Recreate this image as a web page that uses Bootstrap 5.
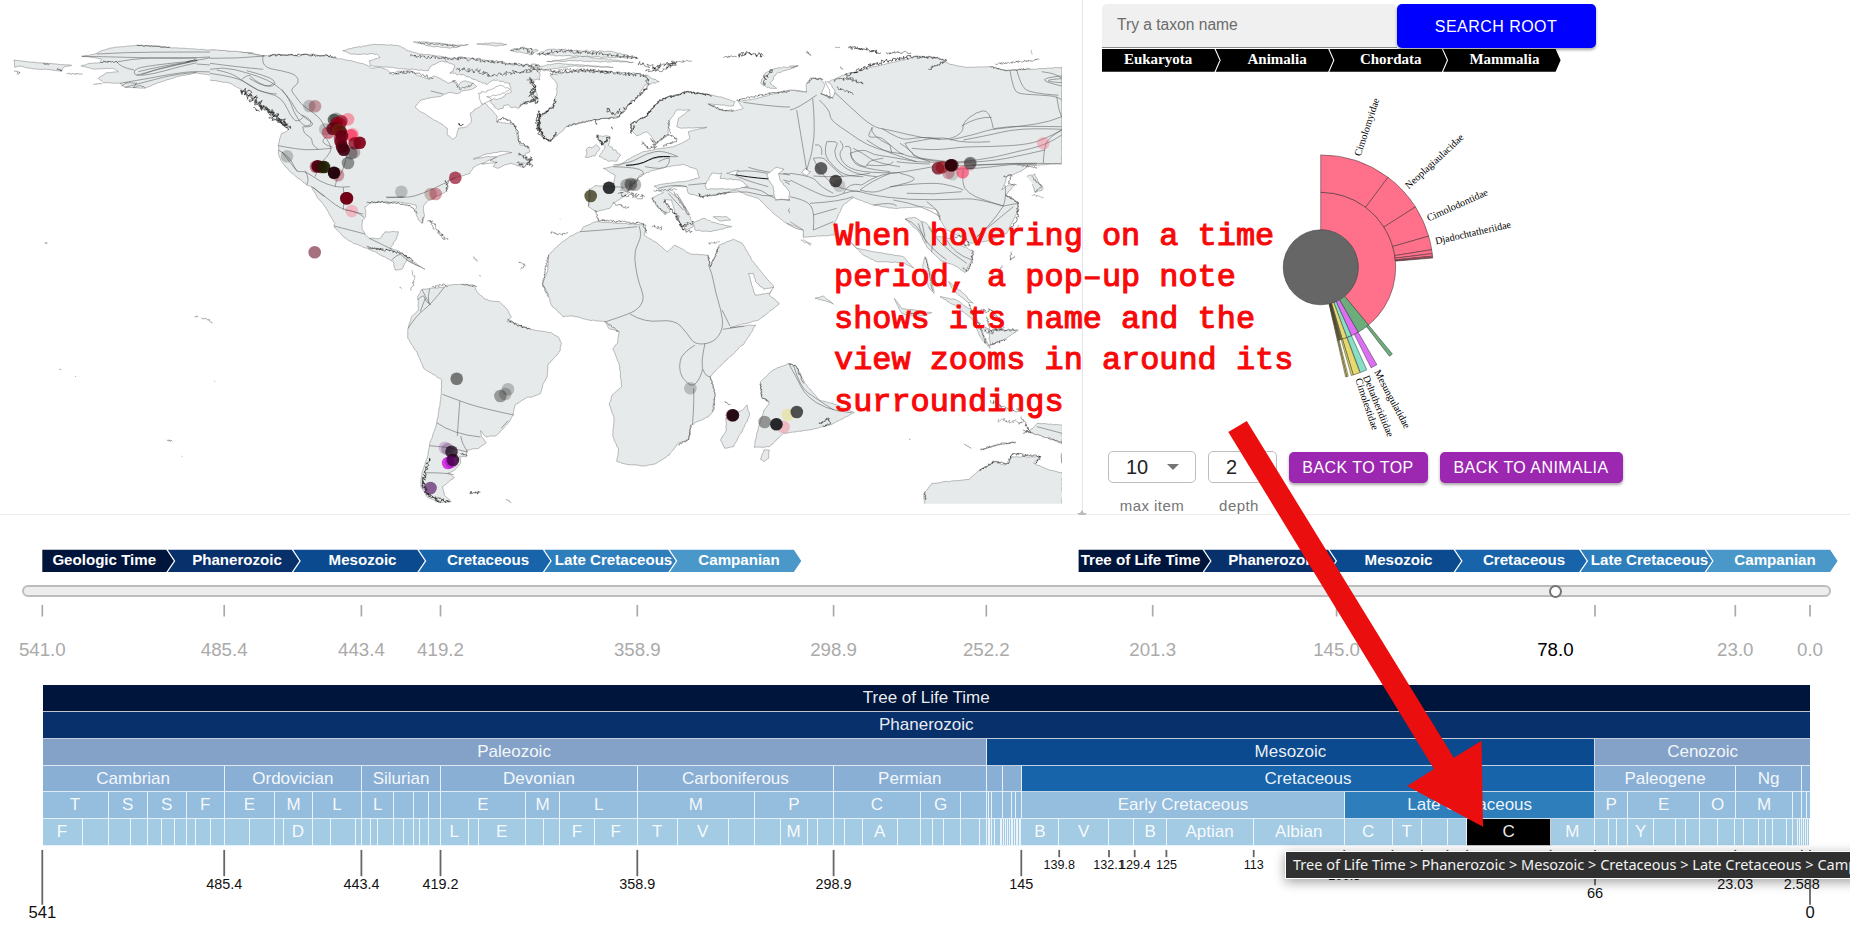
<!DOCTYPE html>
<html lang="en">
<head>
<meta charset="utf-8">
<meta name="viewport" content="width=device-width, initial-scale=1">
<title>Tree of Life Time</title>
<link href="https://cdn.jsdelivr.net/npm/bootstrap@5.3.0/dist/css/bootstrap.min.css" rel="stylesheet">
<style>
body{font-family:"Liberation Sans",Arial,sans-serif;width:1850px;height:942px;background:#fff;color:#000}
svg{display:block}
.stage{width:1850px;height:942px}
.upper{height:515px;border-bottom:1px solid #ececec}
.map-pane{width:1082px}
.tree-pane{border-left:1px solid #e4e4e4;padding:4px 0 0 19px}
.taxon-input{width:295px;height:44px;background:#f0f0f0;border:0;border-bottom:1px solid #8c8c8c;border-radius:5px 5px 0 0;padding:0 15px 1px;font-size:15.6px;color:#6b6b6b}
.taxon-input::placeholder{color:#6b6b6b;opacity:1}
.mbtn{border:0;border-radius:5px;color:#fff;font-size:16px;letter-spacing:.457px;padding:0 1px 0 0;line-height:1;box-shadow:0 2px 3px rgba(0,0,0,.35)}
.mbtn-search{width:199px;height:44px;background:#00f;padding-top:1px}
.mbtn-nav{height:31px;background:#9c27b0}
.sunburst text{font:10.2px "Liberation Serif",serif}
.trail-tree text{font:bold 15px "Liberation Serif",serif;fill:#fff;text-anchor:middle}
.controls{padding-left:6px;margin-top:7px}
.picker{height:32px;border:1px solid #bdbdbd;border-radius:5px;font-size:20px;color:#222;line-height:31px;padding-left:17px}
.caret{width:0;height:0;border:6px solid transparent;border-top:6px solid #757575;border-bottom:0}
.cap{font-size:15px;letter-spacing:.45px;color:#757575;line-height:18px;margin-top:14px}
.lower{height:427px}
.trail-time text{font:bold 15.1px "Liberation Sans",sans-serif;fill:#fff;text-anchor:middle}
.trackbar{height:12px;margin:13px 19px 0 22px;border:2px solid #bdbdbd;border-radius:6px;background:#ededed}
.thumb{width:13px;height:13px;border:2px solid #757575;border-radius:50%;background:#fff;left:1525px;top:-2.5px}
.scale-ticks text{font:18.7px "Liberation Sans",sans-serif;fill:#aaa;text-anchor:middle}
.chart{margin-left:42.5px;width:1767.5px}
.lane{height:26.87px}
.cell{flex:none;overflow:hidden;color:rgba(255,255,255,.93);font-size:17px;line-height:25.4px;text-align:center;white-space:nowrap;border-right:1px solid rgba(255,255,255,.8);border-bottom:1.4px solid rgba(255,255,255,.75)}
.cell:last-child{border-right:0}
.axis text{font-family:"Liberation Sans",sans-serif;text-anchor:middle;fill:#111}
.tip{left:1285px;top:851px;width:700px;height:28px;background:#303030;border:1px solid #fff;box-shadow:0 3px 12px rgba(0,0,0,.38);color:#f2f2f2;font:14.52px "Noto Sans",sans-serif;line-height:24px;padding-left:7px;white-space:nowrap}
.note{left:834px;top:216px;font:31.9px "Liberation Mono",monospace;line-height:41.4px;color:#f80808;white-space:pre;-webkit-text-stroke:1.1px #f80808}
.arrow{left:0;top:0;pointer-events:none}
</style>
</head>
<body>
<div class="stage position-relative overflow-hidden">
  <section class="upper d-flex">
    <div class="map-pane flex-shrink-0"><svg id="map" width="1062" height="504" viewBox="0 0 1062 504"></svg></div>
    <div class="tree-pane flex-grow-1">
      <div class="d-flex">
        <input class="taxon-input" type="text" placeholder="Try a taxon name">
        <button class="mbtn mbtn-search">SEARCH ROOT</button>
      </div>
      <svg class="trail-tree" id="trailTree" width="480" height="25"></svg>
      <svg class="sunburst" id="sun" width="480" height="371" viewBox="1102 73 480 371"></svg>
      <div class="controls d-flex align-items-start">
        <div class="text-center"><div class="picker d-flex align-items-center" style="width:88px"><span>10</span><span class="caret ms-auto me-3"></span></div><div class="cap">max item</div></div>
        <div class="text-center" style="margin-left:12px"><div class="picker d-flex align-items-center" style="width:69px"><span>2</span><span class="caret ms-auto me-3"></span></div><div class="cap" style="margin-right:7px">depth</div></div>
        <button class="mbtn mbtn-nav" style="width:139px;margin-left:12px;margin-top:1px">BACK TO TOP</button>
        <button class="mbtn mbtn-nav" style="width:183px;margin-left:12px;margin-top:1px">BACK TO ANIMALIA</button>
      </div>
    </div>
  </section>
  <section class="lower">
    <svg class="trail-time" id="trailTime" width="1850" height="57"></svg>
    <div class="trackbar position-relative"><span class="thumb position-absolute d-block"></span></div>
    <svg class="scale-ticks" id="ticks" width="1850" height="88"></svg>
    <div class="chart" id="chart"></div>
    <svg class="axis" id="axis" width="1850" height="94" viewBox="0 846.8 1850 94"></svg>
  </section>
  <div class="tip position-absolute">Tree of Life Time &gt; Phanerozoic &gt; Mesozoic &gt; Cretaceous &gt; Late Cretaceous &gt; Campanian</div>
  <div class="note position-absolute">When hovering on a time
period, a pop–up note
shows its name and the
view zooms in around its
surroundings</div>
  <svg class="arrow position-absolute" width="1850" height="942"><path fill="#bbb" d="M1082 510l2 3h3l-2 2h-6l-2-2h3z"/><path fill="#ea0e0e" d="M1228.3 432L1246.8 421L1453.8 757.7L1481.5 740.7L1483 826.7L1407.1 786L1434 769Z"/></svg>
</div>
<script src="https://cdn.jsdelivr.net/npm/bootstrap@5.3.0/dist/js/bootstrap.bundle.min.js"></script>
<script>
const $ = id => document.getElementById(id);
/* seeded generator so coastlines are stable between loads */
let seed = 7; const rnd = () => (seed = (seed * 16807) % 2147483647) / 2147483647 - .5;

/* ---------- palaeogeographic map ---------- */
const tiles = { A:[0,0,.34439], B:[530,0,.35714], C:[210,30,1/3], D:[10,30,1/3], E:[530,30,1/3], F:[790,30,1/3] };
const pts = (t, s) => s.trim().split(/\s+/).map(p => { const [x, y] = p.split(',').map(Number), k = tiles[t]; return [k[0] + x * k[2], k[1] + y / 3]; });
const f = n => n.toFixed(1);
function jag(P, amp, closed, step = 2.2) {
  if (closed) P = P.concat([P[0]]);
  let d = 'M' + f(P[0][0]) + ' ' + f(P[0][1]);
  for (let i = 1; i < P.length; i++) {
    const [a, b] = P[i - 1], [c, e] = P[i], n = Math.max(1, Math.round(Math.hypot(c - a, e - b) / step));
    for (let j = 1; j <= n; j++) { const q = j < n ? amp : 0; d += 'L' + f(a + (c - a) * j / n + rnd() * 2 * q) + ' ' + f(b + (e - b) * j / n + rnd() * 2 * q); }
  }
  return d;
}
function soft(P) {
  let d = 'M' + f(P[0][0]) + ' ' + f(P[0][1]);
  for (let i = 1; i < P.length - 1; i++) { const m = i === P.length - 2 ? P[i + 1] : [(P[i][0] + P[i + 1][0]) / 2, (P[i][1] + P[i + 1][1]) / 2]; d += `Q${f(P[i][0])} ${f(P[i][1])} ${f(m[0])} ${f(m[1])}`; }
  if (P.length === 2) d += 'L' + f(P[1][0]) + ' ' + f(P[1][1]);
  return d;
}
let out = '';
const land = (t, s, amp = .5, closed = true) => out += `<path d="${jag(pts(t, s), amp, closed)}" fill="#e6eaea" stroke="#555" stroke-opacity=".62" stroke-width=".6"/>`;
const sea = (t, s, amp = .5) => out += `<path d="${jag(pts(t, s), amp, true)}" fill="#fff" stroke="#555" stroke-opacity=".65" stroke-width=".6"/>`;
const lines = (t, ...a) => a.forEach(s => out += `<path d="${soft(pts(t, s))}" fill="none" stroke="#555" stroke-opacity=".7" stroke-width=".75"/>`);
const rough = (t, s, amp = 1.5, o = .75) => out += `<path d="${jag(pts(t, s), amp * 1.1, false, .9)}" fill="none" stroke="#222" stroke-opacity="${o}" stroke-width=".75"/>`;

// Alaska and Beringia
land('D', '12,90 60,96 110,100 185,106 160,112 155,124 110,118 70,117 30,108 14,112', .3);
land('D', '780,82 728,69 600,60 470,52 440,48 380,46 300,54 270,64 255,72 215,79 255,83 275,88 270,98 240,100 213,108 250,117 310,115 325,125 290,128 265,145 280,158 330,160 345,172 405,175 440,160 500,140 560,129 600,135 660,155 700,175 780,228', .25, false);
lines('D', '260,72 350,67 500,66 640,66 728,70', '215,79 280,80 420,84 520,86 620,79 560,92 480,100 400,110 370,120 375,138 430,132 500,112 560,98', '325,95 360,88 450,82 560,84', '560,102 700,112 780,118', '330,160 400,148 480,133 560,122 680,133 780,158', '620,120 650,112 700,128 760,152 780,176', '700,138 708,152 735,175 780,185', '560,92 430,120 380,136', '345,172 420,152 500,132 560,127', '320,95 330,112 372,120', '395,134 440,116 520,100 562,90', '385,125 450,108 540,96');
rough('D', '12,123 30,128 20,132', .8, .5); rough('D', '170,131 218,132', .6, .5); rough('D', '250,162 276,162', .6, .5); rough('D', '272,96 325,95', .8, .7); rough('D', '140,118 156,122', .9);
rough('D', '335,168 352,158 380,160 370,172 390,166 405,174', .5, .5); rough('D', '100,100 118,104', .6); rough('D', '380,46 480,52', .5, .7); rough('D', '530,94 562,90', .8, .7);
// North America
land('C', '0,60 80,64 150,76 175,78 185,74 240,74 265,80 280,73 310,72 330,78 352,75 360,82 375,85 390,86 435,95 470,105 482,114 510,112 535,122 548,135 560,124 600,122 620,135 660,148 670,138 695,148 715,160 735,150 745,168 750,158 765,152 790,160 800,170 785,178 760,182 745,190 715,188 690,200 650,205 630,212 615,230 625,240 660,262 700,285 712,295 712,315 728,328 740,318 745,295 770,290 785,275 780,250 800,235 825,220 835,230 850,245 862,262 860,275 890,280 915,285 920,310 930,345 955,350 960,365 945,372 958,400 930,400 940,412 900,400 862,415 850,410 860,397 815,400 790,412 780,430 755,438 735,445 715,450 712,480 700,490 650,515 640,530 643,560 638,580 625,570 618,550 618,525 590,520 555,515 535,522 520,515 480,520 465,530 467,560 457,570 456,595 465,612 478,625 510,625 525,605 565,605 560,625 540,655 570,665 600,690 645,718 610,700 590,690 575,718 555,720 550,695 530,685 500,668 472,655 430,640 400,620 372,590 375,580 345,530 320,500 305,470 290,465 240,425 215,395 205,370 205,345 215,310 235,300 215,280 185,262 165,235 150,225 125,195 95,180 60,160 0,150', .45, false);
sea('C', '790,387 830,372 880,364 905,368 870,376 840,392 862,397 815,402 860,380 830,380', .3);
// Arctic archipelago
land('C', '398,62 440,52 495,43 565,47 595,62 630,72 690,78 720,95 690,95 660,110 655,122 600,118 540,112 480,108 478,92 510,82 500,72 420,72', .5);
land('C', '700,80 800,86 900,100 990,108 990,150 950,150 975,165 985,215 940,215 925,235 890,225 865,240 840,212 870,205 905,185 900,160 850,150 830,165 800,150 780,140 720,130 735,112 715,98', 1.2);
sea('C', '805,190 840,180 870,165 900,178 870,195 830,200 845,210 815,222', .9);
land('C', '610,36 680,38 740,46 775,44 720,55 660,48', .5); land('C', '800,42 850,38 890,43 860,48', .4); land('C', '900,62 940,50 985,62 960,75 930,66', .8);
rough('C', '600,78 700,84 800,90 900,102 985,108', 1.6, .55); rough('C', '740,120 800,122 850,138 900,128 985,120', 2, .55); rough('C', '625,38 750,48', 1, .5); rough('C', '905,60 940,55 970,72', 1.4, .5);
rough('C', '960,150 978,170 960,185 985,205 950,215 930,230', 1.6, .8); rough('C', '990,250 980,280 990,315', 2.3, .8);
rough('C', '860,275 880,262 910,282 925,310 930,340 958,352', 1.1, .7); rough('C', '790,160 750,180 730,150', 1.2, .5); rough('C', '540,130 610,125 670,145', 1.2, .6); rough('C', '745,282 760,285', 1.2, .9);
rough('C', '95,180 125,195 150,222 180,245 215,268 240,290', 2.8, .9); rough('C', '98,186 130,210 165,236 200,262 235,282', 2.8, .8); rough('C', '130,232 148,245', 1, .8); rough('C', '178,262 215,276 236,300', 1.4, .9);
rough('C', '175,77 240,74 280,75 350,76 378,84', .9, .8); rough('C', '925,370 962,392 945,410 920,398', 1.3, .7); rough('C', '708,452 712,485', 1.3, .8); rough('C', '655,572 672,580 685,605 705,630', 1.6, .45); rough('C', '470,518 530,516 600,526 622,550', .7, .7); rough('C', '473,652 520,660 570,668 610,692', 1.2, .8); rough('C', '635,580 640,560', .8, .5); rough('C', '605,720 614,745 603,782', 1.1, .4);
lines('C', '160,75 155,95 172,115 215,122 260,135 268,160 240,178 258,200 275,225 330,262 345,295 350,300', '0,85 80,86 165,78', '0,100 90,112 160,118', '0,118 40,110 110,128 175,150 215,178 245,215 262,245', '20,120 60,128 95,150 140,182 200,195 225,220 240,255 262,280 280,262', '95,148 118,130 130,150 175,172 200,162 180,140 110,122', '0,130 80,142 120,165 160,190 200,192', '215,178 240,210 250,245 280,290 305,285 300,265 275,255', '262,245 290,268 312,280 300,292 280,290', '118,145 175,182 190,160', '205,347 260,358 320,360 365,355', '350,328 368,352 352,380 330,400 315,440', '205,360 240,380 260,428 285,422 330,455 375,470 400,472 420,470', '215,365 235,390 262,425', '285,422 300,445 290,465', '305,470 340,495 375,525 405,540 460,552', '310,472 330,492 345,500', '375,470 378,450 395,430 405,400 412,372', '400,472 405,500 400,540', '278,290 280,310 308,325 305,345 325,358', '368,352 345,345 335,330 350,320', '405,540 440,542 462,562', '372,588 420,600 465,612', '478,625 510,640 545,658', '470,648 500,662 520,655', '545,690 570,665 585,690 630,710', '528,501 590,505 640,490 700,462 735,443', '530,503 580,500', '662,183 700,192');
// islands of the open ocean
[['A','130,728 138,730'],['A','565,950 575,948'],['A','585,953 605,960 616,970'],['A','484,1320 500,1323'],['A','172,1108 178,1109'],['A','1375,770 1385,785'],['A','1505,785 1525,795 1512,808'],['A','1248,660 1260,690'],['A','1270,690 1300,720'],['A','622,1142 624,1145'],['A','1160,862 1166,866'],['A','1468,1498 1485,1508'],['A','1392,827 1396,830'],['A','218,1129 221,1130'],['A','527,1368 530,1370']].forEach(a => rough(a[0], a[1], .8, .5));
rough('A', '1365,1477 1395,1477', 1.6, .8);
// South America
land('A', '1184,1000 1185,985 1195,950 1215,930 1213,890 1225,868 1250,865 1285,862 1300,855 1340,853 1375,855 1385,875 1405,895 1420,902 1450,905 1470,925 1485,950 1472,965 1500,970 1530,985 1568,993 1601,998 1622,1012 1630,1030 1625,1055 1591,1095 1589,1130 1578,1150 1570,1180 1544,1192 1530,1192 1495,1215 1490,1245 1475,1270 1440,1308 1410,1310 1395,1292 1398,1310 1412,1328 1390,1345 1355,1350 1355,1370 1335,1370 1338,1390 1320,1410 1300,1420 1320,1432 1285,1460 1290,1485 1310,1505 1275,1508 1240,1490 1222,1460 1225,1420 1240,1375 1247,1335 1268,1270 1280,1200 1283,1140 1230,1105 1212,1060 1184,1015', .35);
lines('A', '1285,1183 1335,1203 1400,1225 1492,1245', '1335,1203 1328,1308', '1268,1268 1315,1303 1395,1311', '1247,1337 1300,1338 1358,1356', '1338,1308 1342,1335 1358,1355', '1230,1418 1300,1418 1318,1424', '1185,985 1210,945 1250,915 1290,862', '1225,868 1235,890 1250,915', '1247,866 1242,890 1245,910', '1213,900 1230,880 1235,905 1250,915', '1220,935 1235,895', '1475,1262 1455,1285');
rough('A', '1247,1375 1235,1415 1226,1455 1245,1490 1305,1507', 1.8, .85); rough('A', '1228,1440 1240,1480 1280,1505', 1.6, .8); rough('A', '1255,862 1290,852 1300,860', 1.2, .5); rough('A', '1340,853 1385,860', .9, .5); rough('A', '1474,960 1500,975 1540,988', .9, .8); rough('A', '1338,1360 1355,1368', 1, .7);
// Africa and Arabia
land('B', '140,695 110,710 75,740 52,765 50,810 35,850 50,880 60,915 92,950 120,948 165,960 210,965 220,985 250,995 245,1030 232,1045 250,1095 257,1160 230,1185 222,1215 235,1250 232,1310 248,1350 243,1385 270,1393 320,1398 350,1392 390,1365 415,1330 445,1318 450,1275 500,1250 515,1230 518,1180 505,1130 530,1100 600,1030 632,975 600,978 560,983 640,960 665,940 698,912 682,895 670,885 682,860 625,785 595,730 570,718 530,735 505,800 498,765 450,762 405,735 385,755 350,725 320,705 325,675 250,670 185,665 150,680', .4);
sea('B', '612,820 625,820 632,845 655,868 682,862 670,880 630,885 620,850', .5);
lines('B', '140,695 210,690 300,680', '305,677 315,705 292,750 295,800 305,850 320,890 310,920 280,942 212,965', '280,942 320,968 405,958 440,1000 462,1035 515,1028 542,985 535,930 520,880 510,820 500,795', '540,988 600,978', '538,930 560,978', '462,1035 425,1060 417,1100 425,1135 458,1165 485,1115 480,1080 490,1030', '458,1165 460,1200 455,1275', '485,1108 490,1130 505,1130');
rough('B', '52,765 35,850 50,890', .8, .6); rough('B', '505,1130 518,1180 512,1235', .8, .5); rough('B', '450,1275 445,1318 415,1335', .7, .6); rough('B', '498,765 505,800 530,740', .9, .6); rough('B', '210,965 248,995', .9, .5); rough('B', '58,697 80,703 105,700', 1, .5); rough('B', '545,1205 560,1215', 1, .5);
// Madagascar, India, Australia
land('B', '608,1215 615,1245 600,1280 570,1340 545,1345 533,1320 550,1290 548,1255 575,1240 595,1230', .4);
land('B', '725,1090 745,1098 770,1150 810,1200 860,1215 908,1238 840,1275 780,1290 710,1300 670,1340 628,1342 635,1300 655,1230 670,1210 648,1190 645,1145 680,1110', .3);
lines('B', '725,1092 750,1140 765,1175 800,1210 860,1235 900,1238', '738,1096 755,1160 800,1195 850,1230'); land('B', '655,1350 670,1350 668,1375 655,1385 645,1378', .4); rough('B', '810,1272 835,1255 840,1272 820,1278', .9, .8); rough('B', '645,1150 650,1195 670,1205', .9, .6); rough('B', '725,1092 745,1098 765,1150', .9, .6);
land('B', '1105,1511 1103,1480 1125,1450 1230,1438 1260,1410 1300,1385 1330,1395 1350,1370 1430,1370 1410,1390 1450,1408 1490,1418 1490,1511', .5, false);
rough('B', '1260,1412 1300,1385 1340,1390 1350,1362 1430,1370 1415,1392', 1.2, .7); land('B', '1395,1298 1420,1270 1490,1275 1490,1332 1450,1310', .4, false); rough('B', '1375,1250 1400,1295 1380,1300', 1.5, .6); rough('B', '1380,1290 1490,1328', .7, .6); lines('B', '1420,1280 1490,1300', '1262,1350 1310,1332 1360,1326', '1215,1332 1236,1345'); rough('B', '1262,1350 1310,1332 1360,1326', .9, .5); rough('B', '1310,1260 1380,1268', 1.8, .4); rough('B', '1290,1200 1330,1225 1370,1230', 2, .5); rough('B', '1105,1475 1108,1500', .9, .7); rough('B', '1488,1360 1489,1390', .4, .6); rough('B', '1062,1316 1064,1320', .4, .5);
// Greenland and the high Arctic
land('E', '80,160 60,135 120,125 180,122 300,128 350,135 388,155 345,165 320,205 290,230 265,260 180,272 110,290 60,335 30,310 25,265 70,225 80,190', .7);
land('E', '20,72 60,58 150,62 250,65 325,85 260,82 100,78', .8); land('E', '50,95 135,83 150,78 310,97 220,95 130,92', .5); land('E', '0,115 80,100 250,112 130,108 40,120', .4); rough('E', '0,112 60,122 140,118 240,124', 1.5, .4);
rough('E', '25,72 90,62 200,70 322,84', 1.6, .6); rough('E', '60,130 160,122 250,128 350,138', 1.6, .6); rough('E', '350,140 355,165 320,205 290,230 265,260', 1.8, .7); rough('E', '75,210 70,235 30,255 28,290 40,322 60,333 80,308', 1.5, .95); rough('E', '30,245 24,285 45,325', 1.6, .9); rough('E', '230,235 250,252 268,240', 2.3, .7);
rough('E', '325,100 370,112 440,96 400,118 350,118', 2.2, .6); rough('E', '440,95 485,92', .9, .5); rough('E', '0,55 10,68', 1.6, .5); rough('E', '0,145 18,180 0,195 22,220', 2, .7); rough('E', '0,380 5,412', 1.8, .8); rough('E', '110,288 180,272 265,262', .8, .6);
rough('E', '580,82 620,80', 1.2, .6); rough('E', '625,78 650,70 700,76', 2, .8); rough('E', '830,62 842,76', .6, .5);
land('E', '692,160 705,130 740,115 805,107 780,118 740,130 720,160 740,175 710,172', .7); rough('E', '725,120 705,145 700,165', 1.8, .7);
// Europe
land('E', '900,612 820,620 822,600 770,580 730,550 685,505 650,495 620,480 560,495 510,500 475,490 470,470 430,470 415,482 450,510 480,560 490,590 470,600 440,570 425,510 402,508 420,545 405,555 385,530 365,505 378,498 400,488 372,468 410,460 470,453 508,443 500,418 460,403 400,412 330,435 320,455 270,480 300,487 250,520 240,535 200,545 175,530 178,480 195,467 250,470 255,435 220,415 270,405 290,390 340,365 375,358 430,350 455,340 480,325 475,305 530,292 455,295 440,290 445,265 480,240 440,240 420,270 415,290 415,315 378,340 365,320 350,305 320,318 305,300 302,280 345,262 375,225 400,205 470,186 520,190 580,203 615,215 610,228 535,222 570,240 610,245 640,235 625,215 680,205 730,192 780,180 835,185 900,200', .35, false);
rough('E', '305,310 304,282 345,262 375,225 400,206 470,186 545,198', 1.2, .95); rough('E', '310,300 312,285', 1.2, .9); rough('E', '535,222 580,242 612,240', 1.1, .6); rough('E', '620,212 690,195 780,183', 1, .6); rough('E', '375,340 410,315 430,318 440,330 400,350', 1.2, .6); rough('E', '335,335 355,355 380,350 360,325', 1.6, .6); rough('E', '415,270 420,310', 1, .5);
land('E', '208,380 225,350 210,340 205,318 240,320 235,345 272,375 262,392 232,392', .8); land('E', '166,382 172,355 200,345 210,355 195,378', .8); rough('E', '200,315 215,345 238,320', 1.8, .9); rough('E', '246,290 248,298', .9, .9); rough('E', '195,270 200,285', .7, .7);
rough('E', '365,505 385,535 408,550', 1.2, .5); rough('E', '405,510 440,560 460,600 485,605', 1.7, .7); rough('E', '440,560 455,590 490,575', 1.8, .6); rough('E', '430,485 475,555', .8, .5); rough('E', '505,490 520,505', 1.4, .7); rough('E', '265,492 345,500', 2.6, .5); rough('E', '250,520 295,535', 1.2, .5); rough('E', '365,590 395,595', 1.8, .5); rough('E', '370,482 440,478', .8, .5); rough('E', '195,540 205,570 340,580 350,610', 1, .6); rough('E', '515,500 600,488', 1.2, .5); rough('E', '535,640 570,635', 1.2, .4); rough('E', '90,566 91,568', .6, .5); rough('E', '330,440 290,485', .9, .5);
land('E', '490,580 520,565 560,580 605,590 540,605 495,600', .5); land('E', '550,560 590,560 602,570 570,573', .4);
land('E', '820,628 845,642', .5, false);
lines('E', '290,407 330,405 380,378 440,380', '250,405 300,400 350,370 400,360 445,380', '345,410 400,420 418,400 420,378 385,395', '250,410 330,412 345,435 330,440', '640,217 797,240 835,212 865,192', '797,240 815,300 820,400 830,420', '850,222 853,300 850,380 825,430', '850,340 880,340 900,332', '475,465 530,460', '560,492 640,480 700,500 730,497', '600,430 640,415 712,430', '610,433 640,450 715,470', '655,412 700,428 830,440', '620,470 690,475 725,505 800,512 850,520 900,522', '770,580 800,600 822,600', '775,540 800,515 830,520 850,555 850,600', '775,540 790,570 825,605', '850,555 900,530', '760,450 800,465 845,445', '760,430 850,440', '765,455 820,490 900,510', '178,475 185,500 175,528', '250,470 280,472', '850,380 870,430 900,455', '735,510 770,505 840,520', '385,475 440,460 470,470', '415,490 460,540', '440,490 480,555');
out += '<path d="' + soft(pts('E', '288,406 330,405 380,376 420,380')) + '" fill="none" stroke="#111" stroke-width="1"/><path d="' + soft(pts('E', '605,432 650,442 718,447')) + '" fill="none" stroke="#111" stroke-width="1"/>';
sea('E', '525,465 545,430 575,430 570,445 630,450 655,470 610,477 530,477'); sea('E', '590,430 625,420 615,436', .3); sea('E', '712,430 740,412 762,418 745,432 750,450 778,485 778,508 735,508 730,470 715,450'); sea('E', '815,425 830,412 842,425 830,440', .5);
out += '<path d="' + jag(pts('E', '798,240 800,256'), .1) + '" stroke="#111" stroke-width="1.2"/>';
// Asia
land('F', '0,180 50,187 48,165 60,145 90,145 105,165 95,190 118,205 135,190 110,160 125,150 150,140 175,130 200,125 230,115 360,85 375,78 450,85 480,103 530,112 600,110 650,122 720,118 815,112 815,400 780,402 760,405 720,405 690,425 665,435 650,440 645,460 635,480 655,465 675,462 648,495 685,520 680,550 650,610 600,632 540,640 510,620 490,610 470,600 450,570 440,540 400,530 310,535 250,525 190,503 160,525 135,575 133,615 40,622 40,600 0,575', .3, false);
sea('F', '105,155 120,160 135,185 130,200 118,205 120,180', .6); sea('F', '35,428 45,415 62,425 50,438', .6);
rough('F', '50,160 65,145 100,148', 1, .6); rough('F', '135,150 175,145 220,160', 1.6, .6); rough('F', '140,172 190,192', 1, .6); rough('F', '165,135 230,112 290,92 372,80', 1.9, .8); rough('F', '372,80 440,84 470,92 415,118', 1.2, .7); rough('F', '175,55 230,58 270,68', 1.9, .8); rough('F', '288,68 362,68', 1.3, .6); rough('F', '615,102 690,95 748,88', 1, .5); rough('F', '600,110 650,122 720,115', .9, .5); rough('F', '640,440 665,435 655,460 680,465', 1.2, .5); rough('F', '645,495 682,515 684,560 660,600', 1.2, .65); rough('F', '135,52 150,52', .4, .5); rough('F', '150,110 160,118', .7, .6); rough('F', '48,65 62,78', .5, .4); rough('F', '724,60 726,74', .4, .4); rough('F', '0,112 24,108', .6, .4); rough('F', '92,190 130,205', .8, .7);
land('F', '710,440 735,432 745,455 758,470 755,482 735,488 728,462', .9, false); rough('F', '725,440 755,470 735,485', .9, .5); rough('F', '725,495 760,502', 1, .4); rough('F', '680,405 740,412', 1, .6);
land('F', '345,567 370,562 410,580 440,620 480,625 520,650 552,665 545,690 525,728 500,710 450,690 410,650 390,610', .5); rough('F', '520,712 530,725 548,690 545,660', 1.2, .6); rough('F', '490,620 520,618 540,645 500,640', 1.4, .5);
land('F', '170,625 200,655 250,665 340,680 372,715 340,698 260,695 220,675', .25); land('F', '405,680 425,740 432,790 415,770 398,710', .4); rough('F', '408,682 428,782', .6, .6); land('F', '450,800 500,810 550,845 575,900 600,955 570,920 550,870 500,830', .5); land('F', '475,755 520,790 550,820 530,815 490,780', .5); land('F', '313,805 335,835 425,848 380,860 335,850', .4); land('F', '75,805 100,798 130,822 105,812', .4); land('F', '595,900 685,900 650,925 600,945', .6);
rough('F', '560,840 615,845 640,890 600,910 560,880', 2.2, .45); rough('F', '590,860 600,900 680,900', 1.2, .6); rough('F', '535,820 560,870 590,940', 1.5, .5); rough('F', '595,945 650,930', 1.2, .5); rough('F', '688,585 670,615', 1, .5); rough('F', '665,665 660,690 675,680', .8, .6); rough('F', '620,745 638,705', 1, .4); rough('F', '32,630 62,645', .5, .4); rough('F', '350,848 385,855', 1.1, .7);
lines('F', '135,188 180,230 248,292 300,300 400,325 480,330 520,305 518,278 560,245 600,240 610,295', '0,240 20,238 80,195', '20,240 35,330 50,420', '68,205 75,280 68,370 50,420', '88,210 120,240 120,270 180,310 230,345 300,368 340,372', '248,292 225,325 270,318 300,345 350,385 480,398', '275,295 330,330 370,325 420,320 450,328', '230,330 260,350 300,370 380,395', '515,288 560,260 605,262', '480,330 550,315 620,292 700,288 815,290', '520,330 600,315 660,300 740,295 815,298', '345,340 400,330 460,320 520,340 600,335', '660,122 670,180 690,192 750,195 805,200 815,210', '680,120 692,165 720,190 805,196', '800,200 805,240 815,262', '610,298 700,288 780,275 815,260', '755,125 800,130 815,145', '815,138 770,142 758,155 815,168', '815,146 780,148 770,155 815,158', '365,355 430,362 520,350 600,350 700,345 760,330 815,300', '330,340 370,365 370,385 480,395', '380,395 480,400 600,385 680,365 770,345 815,315', '480,400 600,395 700,375 765,360', '815,300 780,320 762,350 760,400', '480,408 600,405 700,398 815,402', '520,420 515,460 535,490 580,510 640,528', '490,418 580,415 680,400 740,405', '545,405 620,402 740,400', '640,528 650,500 645,465', '640,528 685,520', '0,450 60,480 120,505 160,490 200,480 240,495 360,510 500,508 560,505 640,528', '60,520 150,515 190,500', '70,555 140,535', '0,500 50,510 75,545 70,600', '70,600 130,575', '0,430 70,438 90,470 130,490', '70,385 90,430 150,480 210,485', '70,385 100,380 115,400 160,440', '75,345 100,340 95,375', '110,335 100,370 130,410 170,440 220,440', '110,335 150,332 130,360 145,400 200,435 260,440', '150,332 165,350 145,370 165,410 230,430 330,428', '165,350 185,345 180,385 210,415 300,425', '180,370 220,355 250,375 300,380 380,395', '180,370 190,395 230,415 235,390 280,385', '190,355 220,370 260,400 330,410', '320,395 350,400 420,402', '230,405 300,412 310,395', '215,465 260,435 330,428 430,410', '210,480 240,455 300,430', '210,480 250,492 300,470 370,455 375,440 330,430', '300,470 420,455 500,470 520,480', '350,490 430,495 515,485', '160,490 175,455 215,465', '70,438 150,445 240,430', '245,292 240,318 300,345', '300,345 305,370', '345,340 360,380 420,395', '310,510 400,525 450,560', '450,570 455,545 410,515', '640,528 600,590 550,630', '670,530 610,580 560,620', '385,580 395,615 430,660 470,690', '415,590 440,640 530,700', '395,575 405,620', '470,630 490,670 545,690', '430,615 425,665', '345,567 385,580 410,640', '250,525 310,515 320,528');

/* fossil occurrences: tile, x, y, colour, opacity */
const dots = [
 ['C',298,228,'#000',.2],['C',315,229,'#7a0018',.35],['C',378,266,'#222',.3],['C',372,270,'#102018',.6],['C',414,268,'#ff2448',.4],['C',394,274,'#a00020',.7],['C',380,280,'#8a0018',.85],['C',390,282,'#8a0018',.6],['C',346,298,'#444',.25],['C',354,308,'#a00020',.45],['C',368,296,'#5a0010',.8],['C',378,294,'#6a0010',.6],['C',392,306,'#400',.85],['C',385,300,'#6a3010',.5],['C',424,316,'#ff1040',.65],['C',428,312,'#ff3058',.25],['C',388,315,'#b00020',.35],['C',396,318,'#5a0010',.8],['C',390,326,'#700018',.5],['C',392,335,'#700018',.85],['C',434,340,'#8a0018',.75],['C',449,338,'#800018',.92],['C',396,350,'#5a0010',.9],['C',432,367,'#400010',.28],['C',424,370,'#222',.4],['C',401,359,'#400010',.92],['C',414,399,'#303430',.5],['C',231,379,'#000',.2],['C',318,410,'#900018',.5],['C',323,409,'#4a0010',.95],['C',334,411,'#500010',.7],['C',342,411,'#1c2000',.92],['C',384,436,'#900018',.35],['C',372,428,'#200008',.97],['C',409,505,'#300008',.9],['C',411,505,'#780018',.95],['C',425,543,'#ff4868',.3],['C',314,667,'#6c1028',.6],['C',574,485,'#000',.2],['C',662,492,'#704020',.3],['C',677,492,'#a01030',.4],['C',736,443,'#900020',.68],
 ['A',1326,1136,'#222',.58],['A',1475,1168,'#222',.25],['A',1467,1182,'#222',.25],['A',1453,1188,'#222',.4],['A',1292,1343,'#8020a0',.25],['A',1300,1348,'#000',.2],['A',1311,1355,'#180018',.75],['A',1301,1389,'#d000e0',.75],['A',1315,1380,'#280020',.85],['A',1310,1386,'#8000a0',.35],['A',1250,1464,'#501060',.65],
 ['E',182,498,'#383818',.78],['E',237,473,'#161818',.88],['E',290,465,'#333',.35],['E',302,461,'#333',.35],['E',315,464,'#333',.35],['E',303,464,'#222',.3],['E',873,415,'#333',.7],
 ['B',449,1165,'#000',.2],['B',565,1246,'#700018',.4],['B',568,1246,'#18000a',.92],['B',722,1244,'#e8e090',.6],['B',657,1266,'#222',.43],['B',710,1281,'#ff4868',.3],['B',690,1273,'#101416',.9],['B',747,1236,'#222',.78],
 ['F',93,416,'#333',.2],['F',137,453,'#252020',.78],['F',148,467,'#000',.15],['F',760,340,'#ff4868',.3],['F',487,433,'#000',.15],['F',475,428,'#a01030',.35],['F',444,415,'#700018',.75],['F',456,412,'#901018',.75],['F',518,427,'#ff1848',.55],['F',540,403,'#a01030',.3],['F',541,399,'#102c28',.5],['F',483,406,'#300008',.95],['F',487,406,'#300008',.7]];
dots.forEach(([t, x, y, c, o]) => { const p = pts(t, x + ',' + y)[0]; out += `<circle cx="${f(p[0])}" cy="${f(p[1])}" r="6.3" fill="${c}" fill-opacity="${o}"/>`; });
$('map').innerHTML = out;

/* ---------- breadcrumb trails ---------- */
function trail(x0, y0, h, w, tip, list, cols, off, base, gap) {
  let s = '';
  for (let i = list.length - 1; i >= 0; i--) {
    const a = x0 + i * w, b = a + w;
    s += `<path d="M${a} ${y0}H${b - gap}L${b - gap + tip} ${y0 + h / 2}L${b - gap} ${y0 + h}H${a}${i ? `l${tip} ${-h / 2}` : ''}z" fill="${cols[i] || cols[0]}"/>`;
  }
  list.forEach((t, i) => s += `<text x="${i ? x0 + i * w + w / 2 + off : x0 + w / 2 - .8}" y="${base}">${t}</text>`);
  return s;
}
const blues = ['#00153b', '#08306b', '#0b4a8f', '#1764ab', '#2e7ebc', '#4a98c9'];
const names = ['Phanerozoic', 'Mesozoic', 'Cretaceous', 'Late Cretaceous', 'Campanian'];
$('trailTime').innerHTML = trail(42.3, 34.8, 22.2, 125.5, 7.5, ['Geologic Time', ...names], blues, 6.5, 50.3, 1.5) + trail(1078.6, 34.8, 22.2, 125.5, 7.5, ['Tree of Life Time', ...names], blues, 6.2, 50.3, 1.5);
$('trailTree').innerHTML = trail(0, 1, 22.7, 113.7, 5, ['Eukaryota', 'Animalia', 'Chordata', 'Mammalia'], ['#000'], 4.5, 16, 1.2);

/* ---------- sunburst ---------- */
const cx = 1320.7, cy = 267.3, R = [0, 37.5, 75, 112.4];
const pol = (r, a) => { a = (a - 90) * Math.PI / 180; return (cx + r * Math.cos(a)).toFixed(2) + ' ' + (cy + r * Math.sin(a)).toFixed(2); };
const arc = (l, a, b, c) => `<path d="M${pol(R[l], a)}A${R[l]} ${R[l]} 0 0 1 ${pol(R[l], b)}L${pol(R[l + 1], b)}A${R[l + 1]} ${R[l + 1]} 0 0 0 ${pol(R[l + 1], a)}Z" fill="${c}" stroke="#222" stroke-opacity=".65" stroke-width=".7"/>`;
const P = '#ff718b', G = '#6dad7c', V = '#dd70f2', T = '#87dfc6', Y = '#e5d970';
let s = arc(1, 0, 140.4, P) + arc(1, 140.4, 150, G) + arc(1, 150, 155.8, V) + arc(1, 155.8, 159.6, T) + arc(1, 159.6, 163.3, Y);
[163.3, 164.2, 164.9, 165.5, 166, 166.6].forEach((a, i, z) => s += arc(1, a, z[i + 1] || 167.2, '#b8ab55'));
[[0, 36.8, P], [36.8, 57.5, P], [57.5, 73.9, P], [73.9, 81, P], [81, 83, P], [83, 84.3, P], [84.3, 84.9, P], [84.9, 85.3, P], [140.4, 142.3, G], [150, 153.4, V], [155.8, 159.4, T], [159.6, 163.2, Y], [163.2, 164.2, Y], [165.8, 166.6, Y], [166.6, 167.2, Y]].forEach(a => s += arc(2, a[0], a[1], a[2]));
s += `<circle cx="${cx}" cy="${cy}" r="37.5" fill="#666" stroke="#444" stroke-width=".6"/>`;
[['Cimolomyidae', 18.4], ['Neoplagiaulacidae', 47.2], ['Cimolodontidae', 65.7], ['Djadochtatheriidae', 77.4], ['Mesungulatidae', 151.7], ['Deltatheridiidae', 157.6], ['Cimolestidae', 161.5]].forEach(l => s += `<text transform="translate(${cx} ${cy}) rotate(${l[1] - 90})" x="117.4" y="2.8">${l[0]}</text>`);
$('sun').innerHTML = s;

/* ---------- slider scale ---------- */
$('ticks').innerHTML = [[42.3, '541.0'], [224.2, '485.4'], [361.4, '443.4'], [440.5, '419.2'], [637.3, '358.9'], [833.6, '298.9'], [986.3, '252.2'], [1152.7, '201.3'], [1336.6, '145.0'], [1555.4, '78.0'], [1595, ''], [1735.3, '23.0'], [1810, '0.0']].map(([x, t]) => (t === '78.0' ? '' : `<path d="M${x} 8V19.5" stroke="#aaa" stroke-width="1.7"/>`) + `<text x="${x}" y="59"${t === '78.0' ? ' style="fill:#000"' : ''}>${t}</text>`).join('');

/* ---------- icicle chart: right edge and label of every interval ---------- */
const lanes = [
 ['#00153b', '1810 Tree_of_Life_Time'], ['#08306b', '1810 Phanerozoic'],
 ['#84a2c7', '986 Paleozoic|1594.7 Mesozoic #0b4a8f|1810 Cenozoic'],
 ['#8aafd5', '224.2 Cambrian|361.4 Ordovician|440.5 Silurian|637.3 Devonian|833.4 Carboniferous|986 Permian|1002.6|1021.3|1594.7 Cretaceous #1764ab|1735.3 Paleogene|1801.8 Ng|1810'],
 ['#95bddd', '108 T|147.1 S|186.2 S|224.2 F|274.4 E|312.4 M|361.4 L|393.8 L|413.2|428.2|440.5|525.1 E|559.9 M|637.3 L|754.3 M|833.4 P|920.4 C|960.7 G|986|988.4|991.6|1002.6|1011.3|1015.3|1021.3|1344.7 Early_Cretaceous|1594.7 Late_Cretaceous #2e7ebc|1627.8 P|1699.8 E|1735.3 O|1792.7 M|1801.8|1806.5|1810'],
 ['#a3cbe4', '81.9 F|108|130.9|147.1|161.7|174.8|186.2|195.7|210.8|224.2|249.5|274.4|283.5|312.4 D|330.2|355.5|361.4|370.1|377.2|393.8|403.3|413.2|419.5|428.2|440.5|468.2 L|478.5|525.1 E|543.7|559.9|594.3 F|637.3 F|677.2 T|728.6 V|754.3|780.4|807.3 M|818|833.4|844.9|862.3|897.5 A|920.4|932.3|944.1|960.7|979.7|986.3|988.4|989.8|992.2|994.7|1000.3|1001.7|1004.1|1006.2|1008|1010|1011.5|1013|1014.7|1016.8|1017.8|1020|1021.3|1059.2 B|1109 V|1134.3|1166.5 B|1253.5 Aptian|1344.7 Albian|1392.5 C|1421.8 T|1447.5|1467.2|1550.7 C #000|1595 M|1608.8|1616.7|1627.8|1654.3 Y|1675.6|1686.3|1699.8|1718.3|1735.3|1743.6|1758.7|1765.8|1772.5|1786.7|1792.7|1798.2|1800|1801.8|1803.7|1805.7|1807.7|1810']];
$('chart').innerHTML = lanes.map(([bg, row]) => { let x = 42.5; return '<div class="lane d-flex">' + row.split('|').map(c => { const [e, t = '', col] = c.split(' '), edge = +e === 1810 ? 1810 : +e + .6, w = (edge - x).toFixed(1); x = edge; return `<div class="cell" style="width:${w}px;background:${col || bg}">${t.replace(/_/g, ' ')}</div>`; }).join('') + '</div>'; }).join('');

/* ---------- age axis: x, tick end, label, font size, baseline ---------- */
$('axis').innerHTML = [[42.3, 905.5, '541', 16.6, 919.3], [224.2, 877, '485.4', 14.4, 890], [361.4, 877, '443.4', 14.4, 890], [440.5, 877, '419.2', 14.4, 890], [637.3, 877, '358.9', 14.4, 890], [833.6, 877, '298.9', 14.4, 890], [1021.3, 877, '145', 14.4, 890], [1059.2, 858, '139.8', 12.6, 870.3], [1109, 858, '132.1', 12.6, 870.3], [1134.7, 858, '129.4', 12.6, 870.3], [1166.4, 858, '125', 12.6, 870.3], [1253.7, 858, '113', 12.6, 870.3], [1344.3, 868, '100.5', 13, 880.6], [1392.5, 858], [1421.8, 858], [1447.5, 858], [1467.2, 858], [1550.7, 858], [1595, 886, '66', 14.6, 899], [1735.3, 877, '23.03', 14.4, 890], [1801.8, 877, '2.588', 14.4, 890], [1810, 905.5, '0', 16.6, 919.3]].map(([x, e, t, z, b]) => `<path d="M${x} 850.7V${e}" stroke="#666" stroke-width="1.8"/>` + (t ? `<text x="${x}" y="${b}" font-size="${z}">${t}</text>` : '')).join('');
</script>
</body>
</html>
